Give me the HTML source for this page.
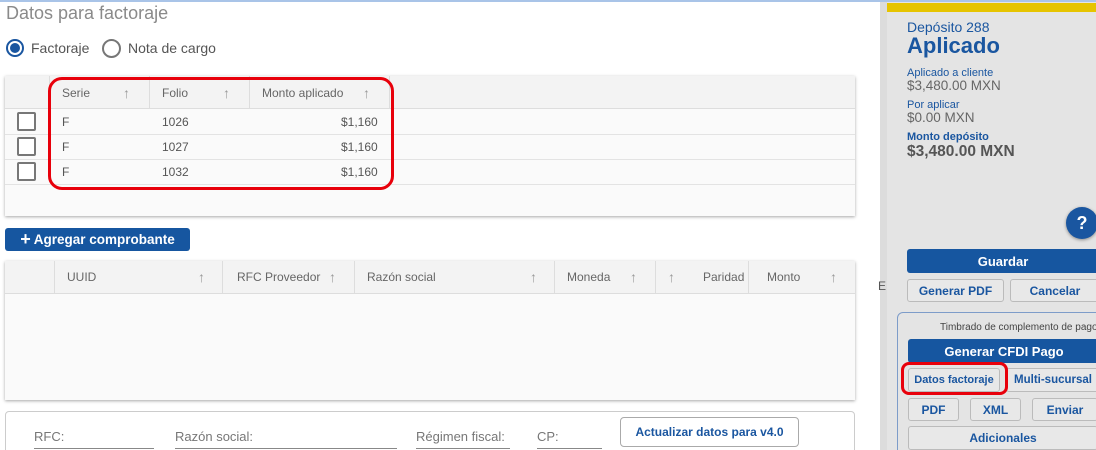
<!DOCTYPE html>
<html style="overflow:hidden;width:1096px;height:450px"><head><meta charset="utf-8"><style>
*{box-sizing:border-box;margin:0;padding:0}
body{width:1096px;height:450px;overflow:hidden;background:#fff;font-family:"Liberation Sans",sans-serif;position:relative}
.a{position:absolute}
.topline{left:0;top:0;width:1096px;height:2px;background:#a9c4e8}
.t{color:#555;font-size:12px;white-space:nowrap}
.hd{color:#666;font-size:12px;white-space:nowrap}
.arr{color:#999;font-size:14px}
.cb{width:19px;height:19px;border:2px solid #777;border-radius:2px;background:#fff}
.btn{background:#1656a0;color:#fff;font-weight:bold;font-size:13px;text-align:center;border-radius:3px;display:flex;align-items:center;justify-content:center;white-space:nowrap}
.ob{border:1px solid #bbb;border-radius:3px;color:#1a56a0;font-weight:bold;font-size:12px;display:flex;align-items:center;justify-content:center;background:#e8e8e8;white-space:nowrap;overflow:hidden}
.bl{color:#1a56a0;white-space:nowrap}
.g{color:#666;white-space:nowrap}
</style></head><body>
<div class="a topline"></div>
<div class="a" style="left:6px;top:3px;font-size:18px;color:#8a8a8a">Datos para factoraje</div>
<div class="a" style="left:6px;top:39px;width:18px;height:18px;border:2px solid #1a56a0;border-radius:50%"></div>
<div class="a" style="left:10px;top:43px;width:10px;height:10px;background:#1a56a0;border-radius:50%"></div>
<div class="a" style="left:31px;top:40px;font-size:14px;color:#555">Factoraje</div>
<div class="a" style="left:102px;top:39px;width:19px;height:19px;border:2px solid #777;border-radius:50%"></div>
<div class="a" style="left:128px;top:40px;font-size:14px;color:#555">Nota de cargo</div>

<div class="a" style="left:5px;top:76px;width:850px;height:140px;background:#fafafa;box-shadow:0 1px 3px rgba(0,0,0,.35)"></div>
<div class="a" style="left:5px;top:76px;width:850px;height:33px;background:#f3f3f3;border-bottom:1px solid #ddd"></div>
<div class="a" style="left:49px;top:76px;width:1px;height:33px;background:#ddd"></div>
<div class="a" style="left:149px;top:76px;width:1px;height:33px;background:#ddd"></div>
<div class="a" style="left:249px;top:76px;width:1px;height:33px;background:#ddd"></div>
<div class="a" style="left:389px;top:76px;width:1px;height:33px;background:#ddd"></div>
<div class="a hd" style="left:62px;top:86px">Serie</div><div class="a arr" style="left:123px;top:85px">↑</div>
<div class="a hd" style="left:162px;top:86px">Folio</div><div class="a arr" style="left:223px;top:85px">↑</div>
<div class="a hd" style="left:262px;top:86px">Monto aplicado</div><div class="a arr" style="left:363px;top:85px">↑</div>
<div class="a" style="left:5px;top:134px;width:850px;height:1px;background:#e3e3e3"></div>
<div class="a" style="left:5px;top:159px;width:850px;height:1px;background:#e3e3e3"></div>
<div class="a" style="left:5px;top:184px;width:850px;height:1px;background:#e3e3e3"></div>
<div class="a cb" style="left:17px;top:112px"></div>
<div class="a cb" style="left:17px;top:137px"></div>
<div class="a cb" style="left:17px;top:162px"></div>
<div class="a t" style="left:62px;top:115px">F</div><div class="a t" style="left:162px;top:115px">1026</div><div class="a t" style="left:341px;top:115px">$1,160</div>
<div class="a t" style="left:62px;top:140px">F</div><div class="a t" style="left:162px;top:140px">1027</div><div class="a t" style="left:341px;top:140px">$1,160</div>
<div class="a t" style="left:62px;top:165px">F</div><div class="a t" style="left:162px;top:165px">1032</div><div class="a t" style="left:341px;top:165px">$1,160</div>
<div class="a" style="left:48px;top:77px;width:346px;height:113px;border:3px solid #e8000b;border-radius:14px"></div>

<div class="a btn" style="left:5px;top:228px;width:185px;height:23px;font-size:13.5px"><span style="font-size:18px;margin-right:3px">+</span>Agregar comprobante</div>

<div class="a" style="left:5px;top:261px;width:850px;height:139px;background:#fafafa;box-shadow:0 1px 3px rgba(0,0,0,.35)"></div>
<div class="a" style="left:5px;top:261px;width:850px;height:33px;background:#f3f3f3;border-bottom:1px solid #ddd"></div>
<div class="a" style="left:54px;top:261px;width:1px;height:33px;background:#ddd"></div>
<div class="a" style="left:222px;top:261px;width:1px;height:33px;background:#ddd"></div>
<div class="a" style="left:354px;top:261px;width:1px;height:33px;background:#ddd"></div>
<div class="a" style="left:554px;top:261px;width:1px;height:33px;background:#ddd"></div>
<div class="a" style="left:655px;top:261px;width:1px;height:33px;background:#ddd"></div>
<div class="a" style="left:748px;top:261px;width:1px;height:33px;background:#ddd"></div>
<div class="a hd" style="left:67px;top:270px">UUID</div><div class="a arr" style="left:198px;top:269px">↑</div>
<div class="a hd" style="left:237px;top:270px">RFC Proveedor</div><div class="a arr" style="left:329px;top:269px">↑</div>
<div class="a hd" style="left:367px;top:270px">Razón social</div><div class="a arr" style="left:530px;top:269px">↑</div>
<div class="a hd" style="left:567px;top:270px">Moneda</div><div class="a arr" style="left:630px;top:269px">↑</div>
<div class="a arr" style="left:668px;top:269px">↑</div><div class="a hd" style="left:703px;top:270px">Paridad</div>
<div class="a hd" style="left:767px;top:270px">Monto</div><div class="a arr" style="left:830px;top:269px">↑</div>

<div class="a" style="left:5px;top:411px;width:850px;height:60px;border:1px solid #ccc;border-radius:4px"></div>
<div class="a g" style="left:34px;top:429px;font-size:13px;color:#777">RFC:</div>
<div class="a" style="left:34px;top:448px;width:120px;height:1px;background:#888"></div>
<div class="a g" style="left:175px;top:429px;font-size:13px;color:#777">Razón social:</div>
<div class="a" style="left:175px;top:448px;width:222px;height:1px;background:#888"></div>
<div class="a g" style="left:416px;top:429px;font-size:13px;color:#777">Régimen fiscal:</div>
<div class="a" style="left:416px;top:448px;width:94px;height:1px;background:#888"></div>
<div class="a g" style="left:537px;top:429px;font-size:13px;color:#777">CP:</div>
<div class="a" style="left:537px;top:448px;width:65px;height:1px;background:#888"></div>
<div class="a" style="left:620px;top:417px;width:179px;height:30px;border:1px solid #aaa;border-radius:4px;color:#1a56a0;font-size:12px;font-weight:bold;display:flex;align-items:center;justify-content:center;white-space:nowrap">Actualizar datos para v4.0</div>

<div class="a" style="left:880px;top:2px;width:7px;height:448px;background:#dcdcdc"></div>
<div class="a" style="left:878px;top:279px;font-size:12px;color:#555">E</div>

<div class="a" style="left:887px;top:2px;width:209px;height:448px;background:#e4e4e4"></div>
<div class="a" style="left:887px;top:3px;width:209px;height:9px;background:#e6c400"></div>
<div class="a bl" style="left:907px;top:19px;font-size:14px">Depósito 288</div>
<div class="a bl" style="left:907px;top:33px;font-size:22px;font-weight:bold">Aplicado</div>
<div class="a bl" style="left:907px;top:67px;font-size:11px">Aplicado a cliente</div>
<div class="a g" style="left:907px;top:78px;font-size:13.5px">$3,480.00 MXN</div>
<div class="a bl" style="left:907px;top:99px;font-size:11px">Por aplicar</div>
<div class="a g" style="left:907px;top:110px;font-size:13.5px">$0.00 MXN</div>
<div class="a bl" style="left:907px;top:131px;font-size:11px;font-weight:bold">Monto depósito</div>
<div class="a" style="left:907px;top:143px;font-size:15.5px;font-weight:bold;color:#555;white-space:nowrap">$3,480.00 MXN</div>
<div class="a" style="left:1066px;top:207px;width:32px;height:32px;border-radius:50%;background:#1a56a0;color:#fff;font-weight:bold;font-size:18px;display:flex;align-items:center;justify-content:center;box-shadow:0 1px 3px rgba(0,0,0,.4)">?</div>
<div class="a btn" style="left:907px;top:249px;width:192px;height:24px">Guardar</div>
<div class="a ob" style="left:907px;top:279px;width:97px;height:23px">Generar PDF</div>
<div class="a ob" style="left:1010px;top:279px;width:90px;height:23px">Cancelar</div>
<div class="a" style="left:897px;top:312px;width:210px;height:150px;border:1px solid #7d9cc9;border-radius:6px"></div>
<div class="a" style="left:940px;top:322px;font-size:10px;color:#444;white-space:nowrap">Timbrado de complemento de pago</div>
<div class="a btn" style="left:908px;top:339px;width:192px;height:24px">Generar CFDI Pago</div>
<div class="a ob" style="left:908px;top:368px;width:92px;height:24px;font-size:11px">Datos factoraje</div>
<div class="a ob" style="left:1006px;top:368px;width:94px;height:24px;font-size:11.5px">Multi-sucursal</div>
<div class="a" style="left:901px;top:362px;width:107px;height:33px;border:3px solid #e8000b;border-radius:8px"></div>
<div class="a ob" style="left:908px;top:398px;width:51px;height:23px">PDF</div>
<div class="a ob" style="left:970px;top:398px;width:51px;height:23px">XML</div>
<div class="a ob" style="left:1032px;top:398px;width:66px;height:23px">Enviar</div>
<div class="a ob" style="left:908px;top:426px;width:190px;height:24px">Adicionales</div>
</body></html>
